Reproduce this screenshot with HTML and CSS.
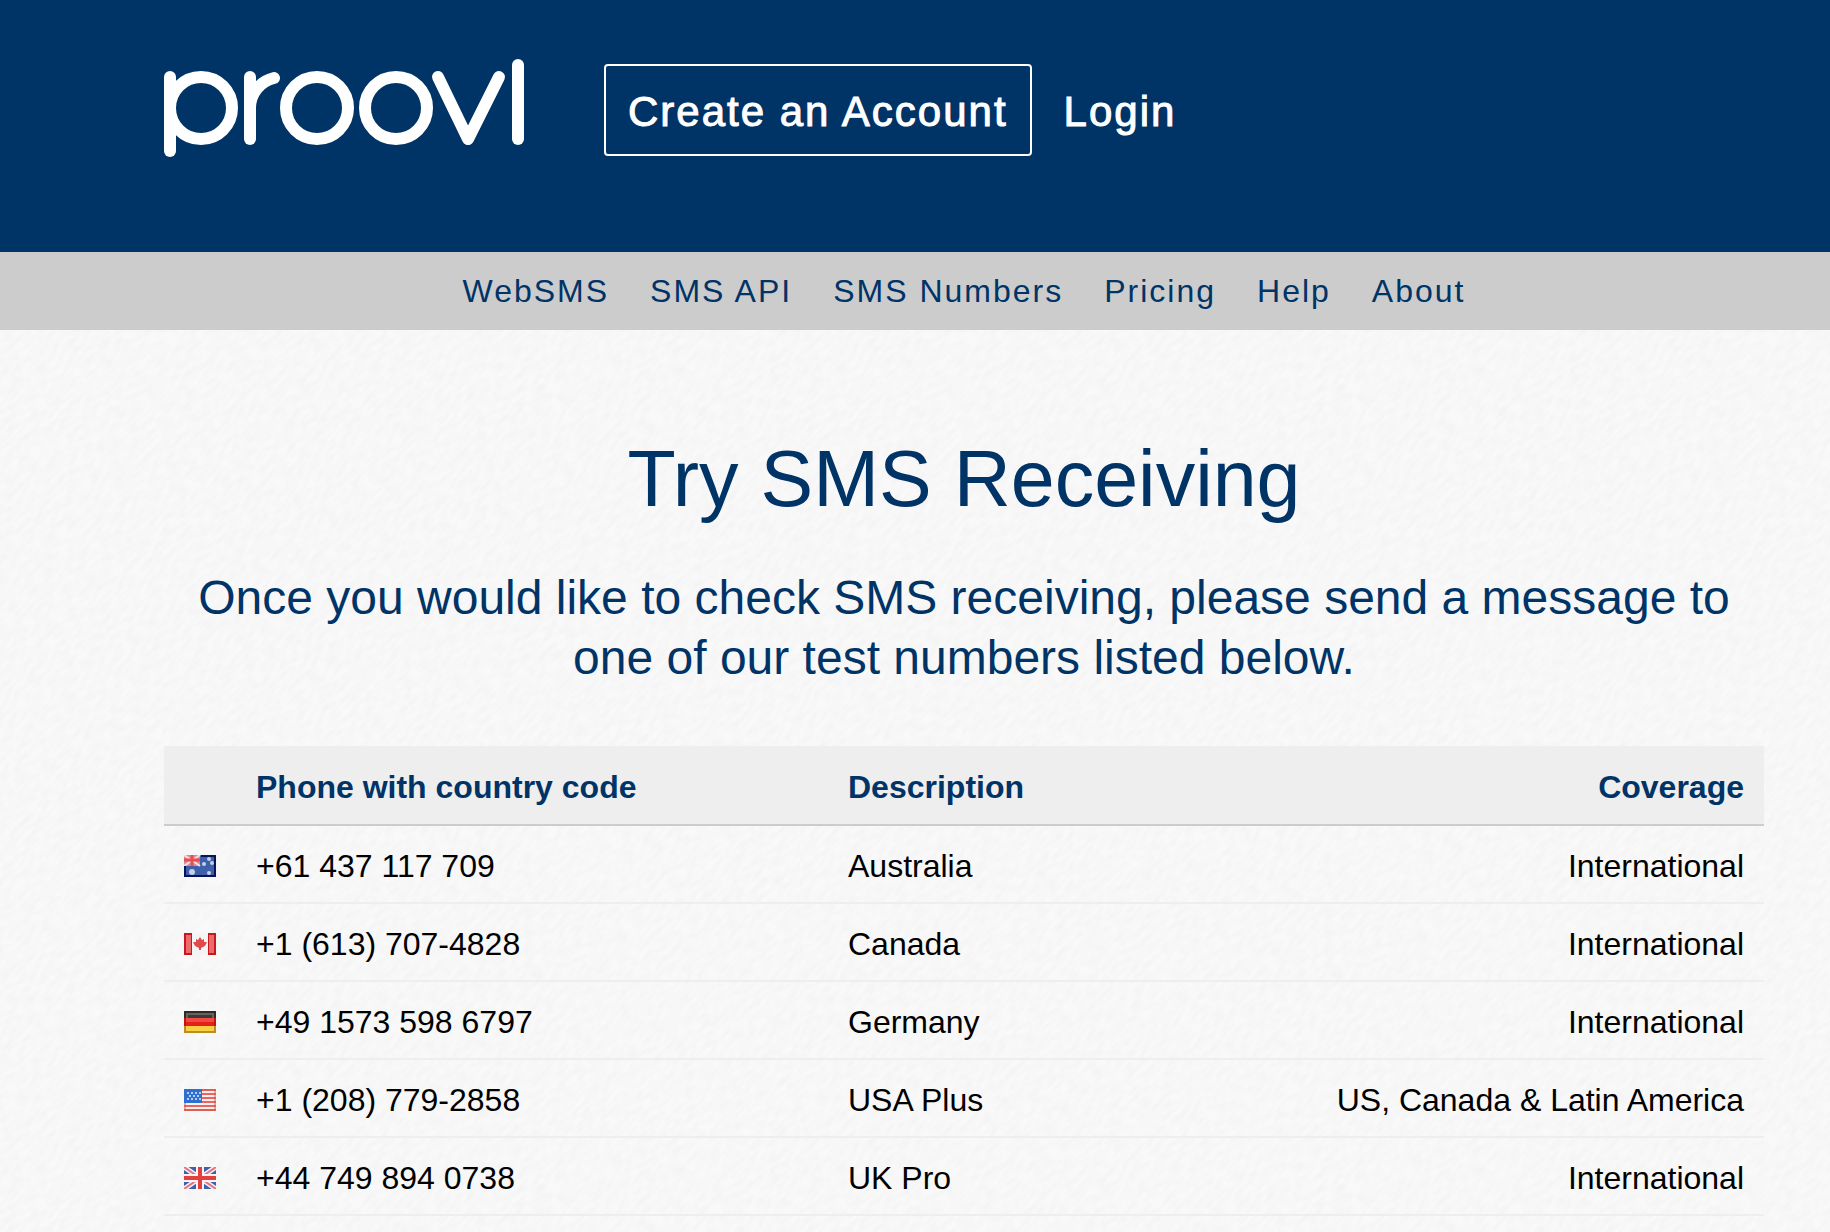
FILE: index.html
```
<!DOCTYPE html>
<html lang="en">
<head>
    <meta charset="UTF-8">
    <meta name="viewport" content="width=device-width, initial-scale=1.0">
    <title>Try SMS Receiving - Proovl</title>
    <link rel="stylesheet" href="styles.css">
</head>
<body>
    <header class="header">
        <a href="#" class="logo">
            <svg width="360" height="98" viewBox="0 0 360 98" role="img" aria-label="proovl">
                <line x1="6" y1="18" x2="6" y2="92"/>
                <circle cx="37" cy="49" r="31"/>
                <line x1="86" y1="18" x2="86" y2="80"/>
                <path d="M86 49A31 31 0 0 1 110 19"/>
                <circle cx="153" cy="49" r="31"/>
                <circle cx="232" cy="49" r="31"/>
                <polyline points="274,18 304,80 335,18"/>
                <line x1="354" y1="6" x2="354" y2="80"/>
            </svg>
        </a>
        <div class="account">
            <a href="#" class="account-link account-create">Create an Account</a>
            <a href="#" class="account-link">Login</a>
        </div>
    </header>

    <nav class="menu">
        <a href="#">WebSMS</a>
        <a href="#">SMS API</a>
        <a href="#">SMS Numbers</a>
        <a href="#">Pricing</a>
        <a href="#">Help</a>
        <a href="#">About</a>
    </nav>

    <main class="content">
        <h1>Try SMS Receiving</h1>
        <p class="lead">Once you would like to check SMS receiving, please send a message to one of our test numbers listed below.</p>

        <table class="numbers">
            <thead>
                <tr>
                    <th class="col-flag"></th>
                    <th class="col-phone">Phone with country code</th>
                    <th>Description</th>
                    <th class="col-coverage">Coverage</th>
                </tr>
            </thead>
            <tbody>
                <tr>
                    <td>
                        <svg class="flag" viewBox="0 0 32 22" aria-hidden="true">
                            <rect width="32" height="22" fill="#3f5fa8"/>
                            <rect width="16" height="11" fill="#d98a98"/>
                            <path d="M0 0L16 11M16 0L0 11" stroke="#f3dfe4" stroke-width="2"/>
                            <path d="M8 0V11M0 5H16" stroke="#e8504f" stroke-width="3"/>
                            <g fill="#c3d0ea">
                                <circle cx="8" cy="17" r="3"/>
                                <circle cx="25" cy="4" r="2"/>
                                <circle cx="20" cy="9" r="2"/>
                                <circle cx="28" cy="8" r="2"/>
                                <circle cx="25" cy="18" r="2"/>
                            </g>
                            <path d="M17 1H31V21H1V11" fill="none" stroke="#07145c" stroke-width="2"/>
                        </svg>
                    </td>
                    <td>+61 437 117 709</td>
                    <td>Australia</td>
                    <td class="col-coverage">International</td>
                </tr>
                <tr>
                    <td>
                        <svg class="flag" viewBox="0 0 32 22" aria-hidden="true">
                            <rect width="32" height="22" fill="#f4f4f5"/>
                            <path d="M0 0H8V22H0ZM24 0H32V22H24Z" fill="#c9171e"/>
                            <path d="M2 2H7V20H2ZM25 2H30V20H25Z" fill="#ec6a6c"/>
                            <path d="M16 4L18 7L20 6L20 9L23 9L21 13L17 15V17H15V15L11 13L9 9L12 9L12 6L14 7Z" fill="#e2494b"/>
                        </svg>
                    </td>
                    <td>+1 (613) 707-4828</td>
                    <td>Canada</td>
                    <td class="col-coverage">International</td>
                </tr>
                <tr>
                    <td>
                        <svg class="flag" viewBox="0 0 32 22" aria-hidden="true">
                            <rect width="32" height="7" fill="#2e2a26"/>
                            <rect y="7" width="32" height="8" fill="#c3140f"/>
                            <rect y="15" width="32" height="7" fill="#b98f22"/>
                            <rect x="2" y="2" width="28" height="5" fill="#66625d"/>
                            <rect x="4" y="4" width="24" height="3" fill="#3c3835"/>
                            <rect x="2" y="7" width="28" height="4" fill="#f04a42"/>
                            <rect x="2" y="11" width="28" height="4" fill="#e5201b"/>
                            <rect x="2" y="15" width="28" height="5" fill="#f9cf45"/>
                        </svg>
                    </td>
                    <td>+49 1573 598 6797</td>
                    <td>Germany</td>
                    <td class="col-coverage">International</td>
                </tr>
                <tr>
                    <td>
                        <svg class="flag" viewBox="0 0 32 22" aria-hidden="true">
                            <rect width="32" height="22" fill="#fbeeee"/>
                            <path d="M0 1H32M0 5H32M0 9H32M0 13H32M0 17H32M0 21H32" stroke="#ea6460" stroke-width="2"/>
                            <rect x="1" y="1" width="30" height="20" fill="none" stroke="#cf5a48" stroke-width="2" opacity=".5"/>
                            <rect width="18" height="14" fill="#2f6fd0"/>
                            <path d="M3 4H17M5 7H17M3 10H17" stroke="#b5d0f5" stroke-width="2" stroke-dasharray="2 2"/>
                        </svg>
                    </td>
                    <td>+1 (208) 779-2858</td>
                    <td>USA Plus</td>
                    <td class="col-coverage">US, Canada &amp; Latin America</td>
                </tr>
                <tr>
                    <td>
                        <svg class="flag" viewBox="0 0 32 22" aria-hidden="true">
                            <rect width="32" height="22" fill="#3a62ad"/>
                            <path d="M0 0L32 22M32 0L0 22" stroke="#f7f0f4" stroke-width="5"/>
                            <path d="M0 0L32 22M32 0L0 22" stroke="#e5757d" stroke-width="2"/>
                            <path d="M16 0V22M0 11H32" stroke="#fbf3f4" stroke-width="8"/>
                            <path d="M16 0V22M0 11H32" stroke="#e2403f" stroke-width="4"/>
                        </svg>
                    </td>
                    <td>+44 749 894 0738</td>
                    <td>UK Pro</td>
                    <td class="col-coverage">International</td>
                </tr>
            </tbody>
        </table>
    </main>
</body>
</html>
```

FILE: styles.css
```
* {
    margin: 0;
    padding: 0;
    box-sizing: border-box;
}
body {
    font-family: "Liberation Sans", Arial, Helvetica, sans-serif;
    font-size: 32px;
    line-height: 38px;
    color: #000;
    background-color: #f9f9f9;
    /* paper grain */
    background-image: url("data:image/svg+xml,%3Csvg xmlns='http://www.w3.org/2000/svg' width='800' height='800'%3E%3Cfilter id='n' x='0' y='0' width='100%25' height='100%25'%3E%3CfeTurbulence type='fractalNoise' baseFrequency='.08 .2' numOctaves='2'/%3E%3CfeColorMatrix values='0 0 0 0 0 0 0 0 0 0 0 0 0 0 0 .04 0 0 0 -.012'/%3E%3C/filter%3E%3Crect x='-600' y='-600' width='1200' height='1200' transform='translate(400 400) rotate(-45)' filter='url(%23n)'/%3E%3C/svg%3E");
}
a {
    color: inherit;
    text-decoration: none;
}

/* Header */
.header {
    display: flex;
    align-items: flex-start;
    gap: 80px;
    min-height: 252px;
    padding: 59px 66px 59px 164px;
    background: #003366;
    color: #fff;
}
.logo svg {
    display: block;
    fill: none;
    stroke: #fff;
    stroke-width: 12px;
    stroke-linecap: round;
    stroke-linejoin: round;
}
.account {
    display: flex;
    align-items: center;
    gap: 8px;
    padding-top: 5px;
}
.account-link {
    padding: 22px 22px 18px;
    border: 2px solid transparent;
    border-radius: 4px;
    font-size: 42px;
    line-height: 48px;
    letter-spacing: 2px;
    -webkit-text-stroke: 1px #fff;
}
.account-create {
    border-color: #fff;
}

/* Menu */
.menu {
    display: flex;
    flex-wrap: wrap;
    justify-content: center;
    gap: 41px;
    padding: 20px 66px 20px 164px;
    background: #ccc;
    color: #003366;
    letter-spacing: 2px;
}

/* Content */
.content {
    padding: 101px 66px 16px 164px;
}
h1 {
    margin-bottom: 41px;
    font-size: 79px;
    line-height: 96px;
    font-weight: normal;
    text-align: center;
    color: #003366;
}
.lead {
    margin-bottom: 58px;
    font-size: 48px;
    line-height: 60px;
    text-align: center;
    color: #003366;
}

/* Numbers table */
.numbers {
    width: 100%;
    border-collapse: separate;
    border-spacing: 0;
    table-layout: fixed;
}
.numbers th,
.numbers td {
    padding: 21px 20px 17px;
    text-align: left;
    border-bottom: 2px solid #eee;
}
.numbers th {
    padding: 22px 20px 18px;
    background: #eee;
    border-bottom-color: #ccc;
    color: #003366;
}
.numbers .col-flag {
    width: 72px;
}
.numbers .col-phone {
    width: 37%;
}
.numbers .col-coverage {
    text-align: right;
}
.flag {
    display: block;
    width: 32px;
    height: 22px;
}
```
